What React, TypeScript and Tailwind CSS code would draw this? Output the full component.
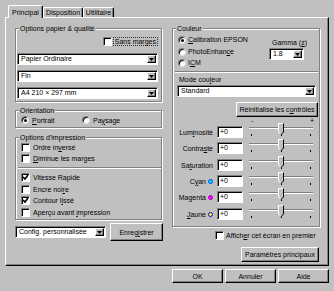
import type { ReactNode } from "react";

const sunken =
  "border border-t-[#808080] border-l-[#808080] border-b-white border-r-white shadow-[inset_1px_1px_0_#000]";
const raised =
  "border border-t-white border-l-white border-b-black border-r-black shadow-[inset_-1px_-1px_0_#808080] bg-[#c0c0c0]";

function U({ t, i }: { t: string; i: number }) {
  if (i < 0) return <>{t}</>;
  return (
    <>
      {t.slice(0, i)}
      <u>{t[i]}</u>
      {t.slice(i + 1)}
    </>
  );
}

function Check({ on }: { on?: boolean }) {
  return (
    <span className={`w-[9px] h-[9px] shrink-0 bg-white flex items-center justify-center ${sunken}`}>
      {on && (
        <svg width="7" height="7" viewBox="0 0 7 7">
          <path d="M1 3l2 2 3-4" stroke="#000" strokeWidth="1.6" fill="none" />
        </svg>
      )}
    </span>
  );
}

function Radio({ on }: { on?: boolean }) {
  return (
    <span className="w-[8px] h-[8px] shrink-0 rounded-full bg-white border border-t-[#808080] border-l-[#808080] border-b-[#dfdfdf] border-r-[#dfdfdf] shadow-[inset_1px_1px_0_#000] pl-[2px] pt-[2px]">
      {on && <span className="block w-[3px] h-[3px] bg-black rounded-full" />}
    </span>
  );
}

function CheckRow({ on, label, className = "" }: { on?: boolean; label: ReactNode; className?: string }) {
  return (
    <div className={`flex items-center h-[9px] gap-[3px] ${className}`}>
      <Check on={on} />
      <span className="whitespace-nowrap">{label}</span>
    </div>
  );
}

function RadioRow({ on, label, className = "" }: { on?: boolean; label: ReactNode; className?: string }) {
  return (
    <div className={`flex items-center h-[9px] gap-[2px] ${className}`}>
      <Radio on={on} />
      <span className="whitespace-nowrap">{label}</span>
    </div>
  );
}

function Select({ value, className }: { value: string; className: string }) {
  return (
    <div className={`flex bg-white p-[1px] ${sunken} ${className}`}>
      <span className="flex-1 pl-[2px] leading-[8px] whitespace-nowrap overflow-hidden">{value}</span>
      <span className={`w-[9px] flex items-center justify-center ${raised}`}>
        <svg width="5" height="3" viewBox="0 0 5 3">
          <path d="M0 0h5L2.5 3z" fill="#000" />
        </svg>
      </span>
    </div>
  );
}

function Group({ title, className, children }: { title: string; className: string; children: ReactNode }) {
  return (
    <div className={`flex flex-col border border-[#808080] shadow-[1px_1px_0_#fff,inset_1px_1px_0_#fff] ${className}`}>
      <span className="-mt-[5px] ml-[3px] px-[1px] self-start bg-[#c0c0c0] whitespace-nowrap">{title}</span>
      {children}
    </div>
  );
}

function Button({ children, className }: { children: ReactNode; className: string }) {
  return (
    <div className={`flex items-center justify-center whitespace-nowrap ${raised} ${className}`}>{children}</div>
  );
}

function Slider() {
  return (
    <div className="relative w-[64px] h-[12px] ml-[6px]">
      <div className="mt-[1px] h-[2px] border-y border-t-[#808080] border-b-white" />
      <div className="mt-[5px] flex justify-between px-[2px]">
        <span className="w-px h-[2px] bg-black" />
        <span className="w-px h-[2px] bg-black" />
        <span className="w-px h-[2px] bg-black" />
      </div>
      <svg className="absolute left-[29px] -top-[3px]" width="6" height="12" viewBox="0 0 6 12">
        <polygon points="0.5,0.5 5.5,0.5 5.5,9 3,11.5 0.5,9" fill="#c0c0c0" />
        <polyline points="3,11.5 0.5,9 0.5,0.5 5.5,0.5" stroke="#fff" fill="none" />
        <polyline points="5.5,0.5 5.5,9 3,11.5" stroke="#000" fill="none" />
      </svg>
    </div>
  );
}

const rows = [
  { label: "Luminosité", u: 3, mt: "mt-[1px]", dot: "" },
  { label: "Contraste", u: 6, mt: "mt-[4px]", dot: "" },
  { label: "Saturation", u: 2, mt: "mt-[5px]", dot: "" },
  { label: "Cyan", u: 1, mt: "mt-[4px]", dot: "bg-[#00e0ff] border-[#0040ff]" },
  { label: "Magenta", u: -1, mt: "mt-[4px]", dot: "bg-[#ff00ff] border-[#a000c0]" },
  { label: "Jaune", u: 0, mt: "mt-[5px]", dot: "bg-[#ffff00] border-[#0000ff]" },
];

export default function App() {
  return (
    <div className="w-[334px] h-[291px] bg-[#c0c0c0] pt-[5px] pl-[5px] overflow-hidden text-black text-[7px] leading-[9px] font-['Liberation_Sans',Arial,sans-serif]">
      <div className="flex items-end h-[12px] pl-[3px]">
        <div className="relative z-10 -mb-px h-[13px] w-[35px] flex items-center justify-center bg-[#c0c0c0] border-t border-l border-r border-t-white border-l-white border-r-black rounded-t-[2px] shadow-[inset_-1px_0_0_#808080]">
          Principal
        </div>
        <div className="h-[10px] w-[40px] flex items-center justify-center border-t border-l border-r border-t-white border-l-white border-r-black rounded-t-[2px] shadow-[inset_-1px_0_0_#808080]">
          Disposition
        </div>
        <div className="h-[10px] w-[31px] flex items-center justify-center border-t border-l border-r border-t-white border-l-white border-r-black rounded-t-[2px] shadow-[inset_-1px_0_0_#808080]">
          Utilitaire
        </div>
      </div>

      <div className="w-[324px] h-[249px] border border-t-white border-l-white border-r-black border-b-black shadow-[inset_-1px_-1px_0_#808080] flex pl-[9px] pt-[10px]">
        <div className="w-[148px] flex flex-col">
          <Group title="Options papier & qualité" className="w-[147px] h-[74px]">
            <div className="mt-[4px] mr-[3px] h-[9px] flex items-center justify-end">
              <Check />
              <span className="ml-[1px] h-[9px] px-[1px] border border-dotted border-[#303030] leading-[7px] whitespace-nowrap">
                Sans marges
              </span>
            </div>
            <Select value="Papier Ordinaire" className="mt-[7px] ml-[1px] mr-[3px] h-[12px]" />
            <Select value="Fin" className="mt-[5px] ml-[1px] mr-[3px] h-[12px]" />
            <Select value="A4 210 × 297 mm" className="mt-[5px] ml-[1px] mr-[3px] h-[12px]" />
          </Group>

          <Group title="Orientation" className="mt-[8px] w-[147px] h-[18px]">
            <div className="mt-[1px] pl-[5px] flex h-[8px] items-center">
              <div className="w-[61px] flex items-center gap-[3px]">
                <Radio on />
                <span>
                  <U t="Portrait" i={0} />
                </span>
              </div>
              <div className="flex items-center gap-[3px]">
                <Radio />
                <span>
                  <U t="Paysage" i={2} />
                </span>
              </div>
            </div>
          </Group>

          <Group title="Options d'impression" className="mt-[9px] w-[147px] h-[83px]">
            <div className="pl-[5px] flex flex-col">
              <CheckRow className="mt-[1px]" label={<U t="Ordre inversé" i={8} />} />
              <CheckRow className="mt-[2px]" label={<U t="Diminue les marges" i={0} />} />
            </div>
            <div className="mt-[4px] ml-[2px] h-[2px] border-y border-t-[#808080] border-b-white" />
            <div className="pl-[5px] flex flex-col">
              <CheckRow on className="mt-[4px]" label="Vitesse Rapide" />
              <CheckRow className="mt-[3px]" label={<U t="Encre noire" i={9} />} />
              <CheckRow on className="mt-[2px]" label={<U t="Contour lissé" i={9} />} />
              <CheckRow className="mt-[3px]" label={<U t="Aperçu avant impression" i={13} />} />
            </div>
          </Group>

          <div className="mt-[3px] flex items-center h-[18px]">
            <Select value="Config. personnalisée" className="w-[91px] h-[12px]" />
            <Button className="ml-[4px] w-[53px] h-[18px]">
              <U t="Enregistrer" i={5} />
            </Button>
          </div>
        </div>

        <div className="ml-[9px] w-[150px] flex flex-col">
          <Group title="Couleur" className="w-[148px] h-[199px]">
            <div className="flex">
              <div className="flex flex-col pl-[5px] mt-[2px]">
                <RadioRow on label={<U t="Calibration EPSON" i={0} />} />
                <RadioRow className="mt-[3px]" label={<U t="PhotoEnhance" i={10} />} />
                <RadioRow className="mt-[2px]" label={<U t="ICM" i={1} />} />
              </div>
              <div className="ml-auto mr-[15px] mt-[5px] w-[35px] flex flex-col">
                <span className="pl-[3px] whitespace-nowrap">
                  <U t="Gamma (z)" i={7} />
                </span>
                <Select value="1.8" className="mt-[1px] h-[12px]" />
              </div>
            </div>
            <div className="mt-[4px] ml-[2px] mr-[1px] h-[2px] border-y border-t-[#808080] border-b-white" />
            <span className="mt-[2px] ml-[6px]">
              <U t="Mode couleur" i={8} />
            </span>
            <Select value="Standard" className="mt-[1px] ml-[4px] mr-[3px] h-[12px]" />
            <Button className="mt-[5px] self-end mr-[1px] w-[82px] h-[15px]">
              <U t="Réinitialise les contrôles" i={18} />
            </Button>
            <div className="ml-[78px] w-[63px] h-[8px] leading-[8px] flex justify-between">
              <span>-</span>
              <span>+</span>
            </div>
            {rows.map((r) => (
              <div key={r.label} className={`flex items-start h-[12px] ${r.mt}`}>
                <div className="w-[40px] h-[12px] flex items-center justify-end gap-[2px]">
                  <span className="whitespace-nowrap">
                    <U t={r.label} i={r.u} />
                  </span>
                  {r.dot && <span className={`w-[5px] h-[5px] shrink-0 rounded-full border ${r.dot}`} />}
                </div>
                <div className={`ml-[4px] w-[26px] h-[12px] bg-white pl-[2px] leading-[10px] ${sunken}`}>+0</div>
                <Slider />
              </div>
            ))}
          </Group>

          <div className="mt-[4px] ml-[43px] flex items-center gap-[2px] h-[9px]">
            <Check />
            <span className="whitespace-nowrap">
              <U t="Afficher cet écran en premier" i={6} />
            </span>
          </div>
          <Button className="mt-[7px] ml-[69px] w-[78px] h-[15px]">Paramètres principaux</Button>
        </div>
      </div>

      <div className="mt-[3px] w-[324px] flex justify-end gap-[2px]">
        <Button className="w-[51px] h-[14px]">OK</Button>
        <Button className="w-[51px] h-[14px]">Annuler</Button>
        <Button className="w-[51px] h-[14px]">Aide</Button>
      </div>
    </div>
  );
}
